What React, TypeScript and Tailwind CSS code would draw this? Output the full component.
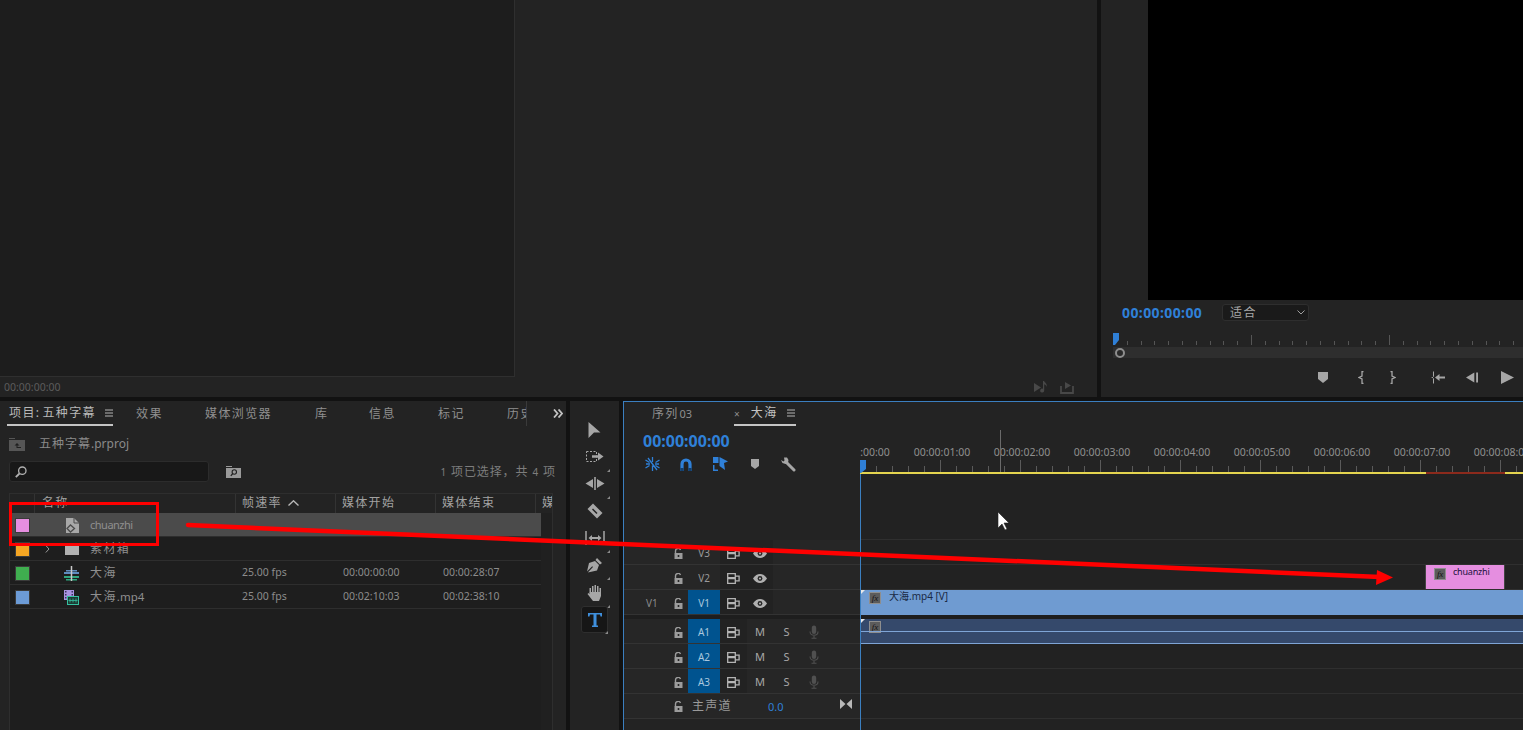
import React from "react";

const cjk = "font-['Noto_Sans','Noto_Sans_CJK_SC',sans-serif]";

const Menu = () => (
  <svg width="8" height="8" viewBox="0 0 8 8" className="shrink-0">
    <path d="M0 1h8M0 4h8M0 7h8" stroke="#b5b5b5" strokeWidth="1" />
  </svg>
);
const Lock = () => (
  <svg width="9" height="11" viewBox="0 0 9 11">
    <path d="M1.5 5V3a2.6 2.6 0 0 1 5-1" fill="none" stroke="#9c9c9c" strokeWidth="1.4" />
    <path d="M0.5 5h8v6h-8z M3.7 7v2h1.6V7z" fill="#9c9c9c" fillRule="evenodd" />
  </svg>
);
const Sync = () => (
  <svg width="13" height="11" viewBox="0 0 13 11" fill="none" stroke="#b4b4b4" strokeWidth="1.3">
    <path d="M0.7 0.7h7.6v4h-7.6zM0.7 5.7h7.6v4.6h-7.6z M8.3 3.2h3.8v4.6h-3.8" />
  </svg>
);
const Eye = () => (
  <svg width="14" height="9" viewBox="0 0 14 9">
    <path d="M0 4.5C2 1.4 4.5 0 7 0s5 1.4 7 4.5C12 7.6 9.5 9 7 9S2 7.6 0 4.5z" fill="#b0b0b0" />
    <circle cx="7" cy="4.5" r="2.4" fill="#262626" />
    <circle cx="7" cy="4.5" r="1.1" fill="#b0b0b0" />
  </svg>
);
const Mic = () => (
  <svg width="10" height="14" viewBox="0 0 10 14" fill="none">
    <rect x="2.8" y="0.5" width="4.4" height="8.5" rx="2.2" fill="#505050" />
    <path d="M1 6.5c0 5 8 5 8 0M5 11v2M2.5 13.3h5" stroke="#505050" strokeWidth="1.1" />
  </svg>
);
const Fx = () => (
  <span className="flex h-[12px] w-[12px] items-center justify-center border border-[#8e8e8e] bg-[#5c5c5c] font-['Liberation_Serif',serif] text-[9px] italic leading-none text-[#111]">
    fx
  </span>
);

const Swatch = ({ c }: { c: string }) => (
  <span className={`block h-[15px] w-[15px] border border-[#3a3a3a] ${c}`} />
);

const rows = [
  { c: "bg-[#e68ee0]", name: "chuanzhi", ext: "", icon: "seq", sel: true, chev: false, fps: "", a: "", b: "" },
  { c: "bg-[#f5a623]", name: "素材箱", ext: "", icon: "bin", sel: false, chev: true, fps: "", a: "", b: "" },
  { c: "bg-[#3fae4f]", name: "大海", ext: "", icon: "wave", sel: false, chev: false, fps: "25.00 fps", a: "00:00:00:00", b: "00:00:28:07" },
  { c: "bg-[#6c9bd6]", name: "大海", ext: ".mp4", icon: "film", sel: false, chev: false, fps: "25.00 fps", a: "00:02:10:03", b: "00:02:38:10" },
];

const ItemIcon = ({ k }: { k: string }) => {
  if (k === "seq")
    return (
      <svg width="13" height="15" viewBox="0 0 13 15">
        <path d="M0 0h8l5 5v10H0z" fill="#a8a8a8" />
        <path d="M8 0v5h5" fill="none" stroke="#4b4b4b" />
        <path d="M1 10.5 4.5 7 8.5 10.5 4.5 14z" fill="none" stroke="#4b4b4b" strokeWidth="1.3" />
      </svg>
    );
  if (k === "bin") return <span className="block h-[11px] w-[14px] bg-[#b0b0b0]" />;
  if (k === "wave")
    return (
      <svg width="15" height="15" viewBox="0 0 15 15">
        <path d="M0 6h15v2H0z" fill="#5f8dbf" />
        <path d="M2 4h11v1.5H2z" fill="#5f8dbf" />
        <path d="M0 10h15v2H0zM2 13h11v1.5H2z" fill="#2fa67f" />
        <path d="M7.5 0v15" stroke="#c9c9c9" strokeWidth="1.5" />
      </svg>
    );
  return (
    <svg width="15" height="15" viewBox="0 0 15 15">
      <path d="M0 0h10v10H0z" fill="#a893e0" />
      <path d="M1 1h1.5v1.5H1zM1 4h1.5v1.5H1zM1 7h1.5v1.5H1zM7.5 1H9v1.5H7.500zM7.5 4H9v1.5H7.500z" fill="#3a3060" />
      <rect x="3.5" y="6.5" width="11" height="8" fill="#1d3a33" stroke="#35c0a0" />
      <path d="M6 8.5v4M9 8.5v4M12 8.5v4M4.5 10.5h9" stroke="#35c0a0" strokeWidth="0.8" />
    </svg>
  );
};

const tabs = [
  { t: "效果", w: "w-[69px]" },
  { t: "媒体浏览器", w: "w-[110px]" },
  { t: "库", w: "w-[54px]" },
  { t: "信息", w: "w-[69px]" },
  { t: "标记", w: "w-[69px]" },
];

function ProjectPanel() {
  return (
    <div className="flex h-full w-[566px] shrink-0 flex-col bg-[#232323]">
      <div className="flex h-[27px] shrink-0 items-start pl-[7px] text-[12px] text-[#8f8f8f]">
        <div className="flex h-[25px] w-[106px] items-center gap-[9px] border-b-2 border-[#c4c4c4] pl-[2px] text-[#b8b8b8] tracking-[1.4px] whitespace-nowrap">
          <span>项目:<span className="ml-[2px]">五种字幕</span></span>
          <Menu />
        </div>
        <div className="w-[23px]" />
        {tabs.map((x) => (
          <div key={x.t} className={`${x.w} flex h-[25px] items-center pt-[1px] tracking-[1.4px] whitespace-nowrap`}>
            {x.t}
          </div>
        ))}
        <div className="flex h-[25px] w-[20px] items-center overflow-hidden border-r border-[#3a3a3a] pt-[1px] tracking-[1.4px] whitespace-nowrap">
          历史记录
        </div>
        <div className="ml-[26px] flex h-[24px] items-center">
          <svg width="10" height="9" viewBox="0 0 10 9" fill="none" stroke="#c4c4c4" strokeWidth="1.8">
            <path d="M1 0.5 4.5 4.5 1 8.5M5.5 0.5 9 4.5 5.5 8.5" />
          </svg>
        </div>
      </div>

      <div className="flex h-[32px] shrink-0 items-center pl-[9px] text-[12px] text-[#8a8a8a]">
        <svg width="16" height="13" viewBox="0 0 16 13">
          <path d="M0 0h6v1H0z M0 2h16v11H0z" fill="#565656" />
          <path d="M8 5 5.5 7.5H7.5V10H12V9H8.5V7.5H10.5z" fill="#1f1f1f" />
        </svg>
        <span className="ml-[14px] tracking-[1px] whitespace-nowrap">五种字幕<span className="tracking-[0px]">.prproj</span></span>
      </div>

      <div className="mt-[1px] flex h-[21px] shrink-0 items-center pl-[9px] pr-[10px]">
        <div className="flex h-[21px] w-[200px] items-center rounded-[3px] border border-[#2c2c2c] bg-[#181818] pl-[5px]">
          <svg width="12" height="12" viewBox="0 0 12 12" fill="none" stroke="#b0b0b0" strokeWidth="1.3">
            <circle cx="7.3" cy="4.7" r="3.7" />
            <path d="M4.5 7.5 0.8 11.2" strokeWidth="1.8" />
          </svg>
        </div>
        <svg className="ml-[17px]" width="15" height="12" viewBox="0 0 15 12">
          <path d="M0 0h6v1H0zM0 2h15v10H0z" fill="#9a9a9a" />
          <circle cx="8.3" cy="6" r="2.2" fill="none" stroke="#222" strokeWidth="1.1" />
          <path d="M6.7 7.6 4.8 9.8" stroke="#222" strokeWidth="1.3" />
        </svg>
        <span className="ml-auto text-[12px] tracking-[0.9px] text-[#7d7d7d] whitespace-nowrap">
          <span className="text-[10px]">1</span> 项已选择，共 <span className="text-[10px]">4</span> 项
        </span>
      </div>

      <div className="mt-[11px] ml-[9px] flex w-[544px] flex-1 flex-col border-l border-r border-t border-[#2e2e2e] bg-[#1e1e1e]">
        <div className="flex h-[19px] shrink-0 items-center bg-[#232323] text-[12px] tracking-[1.3px] text-[#a2a2a2]">
          <div className="h-full w-[25px] border-r border-[#333]" />
          <div className="flex h-full w-[201px] items-center border-r border-[#333] pb-[1px] pl-[7px]">名称</div>
          <div className="flex h-full w-[100px] items-center justify-between border-r border-[#333] pb-[1px] pl-[6px] pr-[36px]">
            <span>帧速率</span>
            <svg width="11" height="6" viewBox="0 0 11 6" fill="none" stroke="#b8b8b8" strokeWidth="1.4">
              <path d="M0.5 5.5 5.5 0.8 10.5 5.5" />
            </svg>
          </div>
          <div className="flex h-full w-[100px] items-center border-r border-[#333] pb-[1px] pl-[6px]">媒体开始</div>
          <div className="flex h-full w-[100px] items-center border-r border-[#333] pb-[1px] pl-[6px]">媒体结束</div>
          <div className="flex h-full flex-1 items-center overflow-hidden pb-[1px] pl-[6px]">媒</div>
        </div>
        <div className="flex flex-1">
          <div className="w-[531px]">
            {rows.map((r) => (
              <div
                key={r.icon}
                className={`flex h-[24px] items-center border-b border-[#2e2e2e] pt-[1px] text-[10.5px] text-[#8f8f8f] ${r.sel ? "bg-[#4b4b4b]" : ""}`}
              >
                <div className="flex w-[25px] justify-start pl-[5px]"><Swatch c={r.c} /></div>
                <div className="flex w-[22px] justify-start pl-[10px]">
                  {r.chev && (
                    <svg width="5" height="8" viewBox="0 0 5 8" fill="none" stroke="#9a9a9a">
                      <path d="M0.8 0.5 4 4 0.8 7.5" />
                    </svg>
                  )}
                </div>
                <div className="flex w-[22px] items-center justify-end"><ItemIcon k={r.icon} /></div>
                <div className="ml-[11px] w-[151px] whitespace-nowrap">
                  {r.sel ? (
                    <span className="text-[11px] tracking-[-0.5px]">{r.name}</span>
                  ) : (
                    <span className="text-[12px] tracking-[1.4px]">{r.name}</span>
                  )}
                  {r.ext && <span className="text-[11.5px]">{r.ext}</span>}
                </div>
                <div className="w-[100px] pl-[1px] text-[#8c8c8c]">{r.fps}</div>
                <div className="w-[100px] pl-[2px] text-[#8c8c8c]">{r.a}</div>
                <div className="w-[100px] pl-[2px] text-[#8c8c8c]">{r.b}</div>
              </div>
            ))}
          </div>
          <div className="flex-1 bg-[#202020]" />
        </div>
      </div>
    </div>
  );
}

const Corner = () => <span className="absolute -bottom-[2px] -right-[1px] h-0 w-0 border-b-[3px] border-l-[3px] border-b-[#8a8a8a] border-l-transparent" />;

function Tools() {
  const c = "#a6a6a6";
  const cell = "relative flex h-[27px] w-[28px] items-center justify-center";
  return (
    <div className="ml-[4px] flex h-full w-[49px] shrink-0 flex-col items-center bg-[#232323] pt-[15px]">
      <div className={cell}>
        <svg width="13" height="16" viewBox="0 0 13 16"><path d="M0.5 0 12.5 10.5 6 10.5 0.5 16z" fill={c} /></svg>
      </div>
      <div className={cell}>
        <svg width="18" height="11" viewBox="0 0 18 11">
          <rect x="0.5" y="0.5" width="10" height="10" fill="none" stroke={c} strokeDasharray="2 1.5" />
          <path d="M6 4.2h6V1.5l5.5 4-5.5 4V6.8H6z" fill={c} />
        </svg>
        <Corner />
      </div>
      <div className={cell}>
        <svg width="20" height="13" viewBox="0 0 20 13">
          <path d="M9.2 0h1.600v13H9.200z M0.500 6.500 8 2v9zM19.500 6.500 12 2v9z" fill={c} />
        </svg>
        <Corner />
      </div>
      <div className={cell}>
        <svg width="16" height="16" viewBox="0 0 16 16">
          <path d="M6 0.5 15.5 10 10 15.5 0.5 6z" fill={c} />
          <path d="M5.5 6 10 10.5" stroke="#232323" strokeWidth="1.5" />
        </svg>
      </div>
      <div className={cell}>
        <svg width="20" height="14" viewBox="0 0 20 14">
          <path d="M1 0v14M19 0v14" stroke={c} strokeWidth="1.5" />
          <path d="M3.5 7 7 4v2h6V4l3.5 3L13 10V8H7v2z" fill={c} />
        </svg>
        <Corner />
      </div>
      <div className={`${cell} h-[26px]`}>
        <svg width="16" height="16" viewBox="0 0 16 16">
          <path d="M10 1l5 5-2 1.5L8.5 3z M8 4l4 4-2 5.5L0.800 15.500 6 10l-0.800-0.800L0 14.500 2 6z" fill={c} />
        </svg>
        <Corner />
      </div>
      <div className={`${cell} h-[28px]`}>
        <svg width="16" height="17" viewBox="0 0 16 17" fill={c}>
          <path d="M5 2h1.5v7H5zM7.5 1H9v8H7.5zM10 2h1.5v7H10zM12.500 4H14v7h-1.500zM2.500 4H4v7H2.500z" />
          <path d="M2.500 8H14v4l-2 5H6L0.500 10l1-1 2 1.500z" />
        </svg>
        <Corner />
      </div>
      <div className="relative flex h-[27px] w-[27px] items-center justify-center rounded-[3px] border border-[#2e2e2e] bg-[#161616]">
        <svg width="14" height="14" viewBox="0 0 14 14" fill="#3f8fdc">
          <path d="M0 0h14v3.500h-1.500l-0.500-2H8.500v11H10V14H4v-1.500h1.500v-11H2l-0.500 2H0z" />
        </svg>
        <Corner />
      </div>
    </div>
  );
}

type T = { id: string; src?: string; on?: boolean; audio?: boolean };
const video: T[] = [{ id: "V3" }, { id: "V2" }, { id: "V1", src: "V1", on: true }];
const audio: T[] = [
  { id: "A1", on: true, audio: true },
  { id: "A2", on: true, audio: true },
  { id: "A3", on: true, audio: true },
];

function TrackHead({ t }: { t: T }) {
  return (
    <div className="flex h-[25px] items-stretch border-b border-[#333] bg-[#262626] text-[10px] text-[#9a9a9a]">
      <div className="flex w-[46px] items-center justify-start pl-[22px] pt-[2px] text-[#8a8a8a]">
        {t.src && <span>{t.src}</span>}
      </div>
      <div className="flex w-[16px] items-center justify-center pt-[2px]"><Lock /></div>
      <div className="w-[2px]" />
      <div className={`flex w-[32px] items-center justify-center pt-[2px] ${t.on ? "bg-[#00538f] text-[#a9c7de]" : ""}`}>
        {t.id}
      </div>
      <div className="flex w-[27px] items-center justify-center bg-[#222] pt-[2px]"><Sync /></div>
      {t.audio ? (
        <>
          <div className="flex w-[26px] items-center justify-center pt-[2px] text-[11px] text-[#a8a8a8]">M</div>
          <div className="flex w-[27px] items-center justify-center pt-[2px] text-[11px] text-[#a8a8a8]">S</div>
          <div className="flex w-[27px] items-center justify-center pt-[2px]"><Mic /></div>
        </>
      ) : (
        <div className="flex w-[26px] items-center justify-center bg-[#222] pt-[2px]"><Eye /></div>
      )}
    </div>
  );
}

function Ruler() {
  const labels = [":00:00", "00:00:01:00", "00:00:02:00", "00:00:03:00", "00:00:04:00", "00:00:05:00", "00:00:06:00", "00:00:07:00", "00:00:08:00"];
  const ticks = Array.from({ length: 42 }, (_, i) => i * 16);
  return (
    <div className="relative h-[46px] shrink-0 overflow-hidden">
      <div className="-mb-[1px] -ml-[38px] flex h-[33px] items-end text-[10.5px] text-[#8f8f8f]">
        {labels.map((l, i) => (
          <div key={l} className={`w-[80px] shrink-0 text-center whitespace-nowrap ${i === 0 ? "pl-[26px]" : ""}`}>{l}</div>
        ))}
      </div>
      <svg width="663" height="12" viewBox="0 0 663 12" className="block">
        {ticks.map((x) => (
          <path key={x} d={`M${x + 0.5} ${x % 80 === 0 ? 0 : 6}V12`} stroke="#5a5a5a" />
        ))}
      </svg>
      <div className="flex h-[2px]">
        <div className="w-[566px] bg-[#e4d44f]" />
        <div className="w-[79px] bg-[#8c2a1c]" />
        <div className="flex-1 bg-[#e4d44f]" />
      </div>
      <svg width="7" height="13" viewBox="0 0 7 13" className="absolute left-0 top-[32px]">
        <path d="M0 0h6v9L1 13H0z" fill="#2f7fd6" />
      </svg>
    </div>
  );
}

const ClipCorner = () => (
  <span className="absolute left-0 top-0 h-0 w-0 border-r-[4px] border-t-[4px] border-r-transparent border-t-[#e8e8e8]" />
);

function Timeline() {
  return (
    <div className="ml-[4px] flex h-full flex-1 flex-col overflow-hidden border-l border-t border-[#3b7fc0] bg-[#232323]">
      <div className="flex h-[26px] shrink-0 items-start pl-[28px] text-[12px] text-[#8f8f8f]">
        <div className="flex h-[24px] w-[79px] items-center tracking-[1.2px] whitespace-nowrap">序列<span className="ml-[1px] text-[11px] tracking-[0px]">03</span></div>
        <div className="flex h-[24px] w-[3px] items-center" />
        <div className="flex h-[24px] items-center text-[10px]">×</div>
        <div className="ml-[-6px] flex h-[24px] w-[62px] items-center gap-[9px] border-b-2 border-[#c4c4c4] pl-[17px] text-[#c4c4c4] tracking-[1.4px] whitespace-nowrap">
          <span>大海</span>
          <Menu />
        </div>
      </div>
      <div className="flex flex-1 flex-col">
        <div className="flex flex-1">
          <div className="flex w-[236px] shrink-0 flex-col">
            <div className="flex h-[112px] flex-col pl-[19px] pt-[1px]">
              <div className="h-[24px] text-[16px] font-bold leading-[24px] text-[#2f80d8] whitespace-nowrap">00:00:00:00</div>
              <div className="mt-[3px] flex h-[16px] items-center pl-[2px]">
                <svg width="15" height="14" viewBox="0 0 15 14" fill="none" stroke="#2f80d8" strokeWidth="1.3">
                  <path d="M7.5 0v5M7.5 8.5v5.500M0.500 3l4 2.500M10.500 8.500l4 2.500M0.500 11l4-2.500M10.500 5.500l4-2.500M1 7h4M10 7h4M3 1l9 12" />
                </svg>
                <svg className="ml-[20px]" width="12" height="13" viewBox="0 0 12 13" fill="none">
                  <path d="M2 13V6a4 4 0 0 1 8 0v7" stroke="#2f80d8" strokeWidth="3.2" />
                  <path d="M0.4 11.500h3.200M8.400 11.500h3.200" stroke="#123f6e" strokeWidth="3" />
                </svg>
                <svg className="ml-[21px]" width="15" height="14" viewBox="0 0 15 14">
                  <path d="M0 0h5.500v6H0zM0 8h1.500v4.500H5V14H0z" fill="#2f80d8" />
                  <path d="M6.500 0 15 4.500l-4 1.500 1 7-5.500-4z" fill="#2f80d8" />
                </svg>
                <svg className="ml-[23px]" width="8" height="10" viewBox="0 0 8 10"><path d="M0 0h8v7L4 10 0 7z" fill="#a6a6a6" /></svg>
                <svg className="ml-[22px]" width="15" height="15" viewBox="0 0 15 15" fill="none">
                  <path d="M5.500 5.500 13 13" stroke="#a6a6a6" strokeWidth="3" strokeLinecap="round" />
                  <path d="M3 0.500l3 0 1.500 2.500-0.500 3-2.500 1L1.500 6 0 3l2.500 1.500L3.500 3.500z" fill="#a6a6a6" />
                </svg>
              </div>
            </div>
            {video.map((t) => <TrackHead key={t.id} t={t} />)}
            <div className="h-[4px] shrink-0 bg-[#1e1e1e]" />
            {audio.map((t) => <TrackHead key={t.id} t={t} />)}
            <div className="flex h-[25px] items-center border-b border-[#333] bg-[#262626] text-[12px] text-[#9a9a9a]">
              <div className="w-[46px]" />
              <div className="flex w-[16px] justify-center"><Lock /></div>
              <div className="ml-[6px] w-[76px] tracking-[1.3px] whitespace-nowrap">主声道</div>
              <div className="w-[28px] pt-[2px] text-[11px] text-[#2f80d8]">0.0</div>
              <div className="ml-[44px] -mt-[5px]">
                <svg width="12" height="10" viewBox="0 0 12 10"><path d="M0 0l5.500 5L0 10zM12 0 6.500 5l5.500 5z" fill="#b8b8b8" /></svg>
              </div>
            </div>
          </div>
          <div className="flex flex-1 flex-col">
            <Ruler />
            <div className="flex flex-1 flex-col border-l border-[#3b7fc0] bg-[#222]">
              <div className="h-[66px] shrink-0 border-b border-[#2f2f2f]" />
              <div className="h-[25px] shrink-0 border-b border-[#2f2f2f]" />
              <div className="h-[25px] shrink-0 border-b border-[#2f2f2f] pl-[564px]">
                <div className="flex h-full w-[80px] items-start gap-[7px] border-x border-[#444] bg-[#e58ee0] pl-[8px] pt-[1px] text-[9px] leading-[11px] tracking-[-0.2px] text-[#1a1140]">
                  <span className="mt-[2px]"><Fx /></span>
                  <span>chuanzhi</span>
                </div>
              </div>
              <div className="relative flex h-[25px] shrink-0 items-start gap-[8px] bg-[#6f9bd1] pl-[8px] pt-[1px] text-[10px] leading-[11px] text-[#1a2a44]">
                <ClipCorner />
                <span className="mt-[1px]"><Fx /></span>
                <span className="whitespace-nowrap">大海.mp4 [V]</span>
              </div>
              <div className="h-[4px] shrink-0 bg-[#1e1e1e]" />
              <div className="relative flex h-[25px] shrink-0 flex-col border-b border-[#7fa5d6] bg-[#35496b] pl-[8px]">
                <ClipCorner />
                <div className="h-[11px] pt-[2px]"><Fx /></div>
                <div className="-ml-[8px] mt-[1px] h-[1px] bg-[#7fa5d6]" />
              </div>
              <div className="h-[25px] shrink-0 border-b border-[#2f2f2f]" />
              <div className="h-[25px] shrink-0 border-b border-[#2f2f2f]" />
              <div className="h-[25px] shrink-0 border-b border-[#2f2f2f]" />
            </div>
          </div>
        </div>
      </div>
    </div>
  );
}

function Program() {
  const ticks = Array.from({ length: 30 }, (_, i) => i);
  return (
    <div className="ml-[4px] flex h-full flex-1 flex-col bg-[#232323]">
      <div className="flex h-[300px] shrink-0">
        <div className="w-[47px]" />
        <div className="flex-1 bg-black" />
      </div>
      <div className="flex h-[33px] shrink-0 items-start pl-[21px] pt-[4px]">
        <span className="w-[100px] text-[14px] font-bold leading-[17px] tracking-[0.4px] text-[#2f80d8] whitespace-nowrap">00:00:00:00</span>
        <div className="flex h-[17px] w-[87px] items-center justify-between rounded-[3px] border border-[#2e2e2e] bg-[#1a1a1a] pl-[7px] pr-[3px] text-[12px] tracking-[1.5px] text-[#a8a8a8]">
          <span>适合</span>
          <svg width="8" height="5" viewBox="0 0 8 5" fill="none" stroke="#a0a0a0"><path d="M0.5 0.5 4 4l3.5-3.5" /></svg>
        </div>
      </div>
      <div className="relative ml-[12px] h-[12px] shrink-0">
        <svg width="410" height="12" viewBox="0 0 410 12" className="block">
          {ticks.map((i) => (
            <path key={i} d={`M${Math.round(i * 13.8) + 0.5} ${i % 10 === 0 && i > 0 ? 2 : 8}V12`} stroke="#555" />
          ))}
          <path d="M0 0h6v7l-4 5H0z" fill="#2f7fd6" />
        </svg>
      </div>
      <div className="relative ml-[12px] mt-[2px] flex h-[11px] shrink-0 items-center bg-[#2e2e2e]">
        <span className="absolute left-[2px] block h-[10px] w-[10px] rounded-full border-2 border-[#8e8e8e] bg-[#2a2a2a]" />
      </div>
      <div className="flex h-[39px] shrink-0 items-center pl-[217px]">
        <svg width="10" height="11" viewBox="0 0 10 11"><path d="M0 0h10v7l-5 4L0 7z" fill="#a6a6a6" /></svg>
        <svg className="ml-[30px]" width="6" height="13" viewBox="0 0 6 13" fill="none" stroke="#a6a6a6" strokeWidth="1.3"><path d="M5.5 0.5h-1.5v4.5L1 6.5l3 1.5v4.5h1.5" /></svg>
        <svg className="ml-[26px]" width="6" height="13" viewBox="0 0 6 13" fill="none" stroke="#a6a6a6" strokeWidth="1.3"><path d="M0.5 0.5h1.5v4.5l3 1.5-3 1.5v4.5H0.5" /></svg>
        <svg className="ml-[34px]" width="15" height="13" viewBox="0 0 15 13">
          <path d="M3 0.5h1v5L1 6.5l3 1v5H3z" fill="#a6a6a6" />
          <path d="M5 6.5 9.5 3v2.5H15v2H9.5V10z" fill="#a6a6a6" />
        </svg>
        <svg className="ml-[21px]" width="12" height="11" viewBox="0 0 13 11"><path d="M9 0v11L0 5.5zM11 0h2v11h-2z" fill="#a6a6a6" /></svg>
        <svg className="ml-[23px]" width="13" height="13" viewBox="0 0 13 13"><path d="M0 0l13 6.5L0 13z" fill="#a6a6a6" /></svg>
      </div>
    </div>
  );
}

function Source() {
  return (
    <div className="flex h-full w-[1097px] shrink-0 flex-col bg-[#232323]">
      <div className="h-[377px] w-[515px] shrink-0 border-b border-r border-[#2f2f2f] bg-[#1d1d1d]" />
      <div className="flex h-[20px] items-center justify-between pl-[4px] pr-[23px] pt-[1px]">
        <span className="text-[10.5px] text-[#5c5c5c]">00:00:00:00</span>
        <div className="flex items-center gap-[12px]">
          <svg width="14" height="13" viewBox="0 0 14 13" fill="#484848">
            <path d="M0 2v9l7-4.500z" />
            <path d="M9 0h1.200v9.500a2 2 0 1 1-1.200-1.800zM10 0c1 2 3.500 2.500 2.500 6-0.300-2-1.500-2.500-2.500-3z" />
          </svg>
          <svg width="14" height="13" viewBox="0 0 14 13" fill="none" stroke="#484848" strokeWidth="1.8">
            <path d="M1 5v7h12V5" />
            <path d="M5 1l6 3.500L5 8z" fill="#484848" stroke="none" />
          </svg>
        </div>
      </div>
    </div>
  );
}

export default function App() {
  return (
    <div className={`relative h-[730px] w-[1523px] overflow-hidden bg-[#121212] ${cjk}`}>
      <div className="flex h-[397px]">
        <Source />
        <Program />
      </div>
      <div className="mt-[4px] flex h-[329px]">
        <ProjectPanel />
        <Tools />
        <Timeline />
      </div>

      {/* annotations lying over the interface */}
      <div className="absolute left-[9px] top-[502px] h-[44px] w-[150px] border-[3px] border-[#ff0000]" />
      <svg className="absolute left-0 top-0" width="1523" height="730" viewBox="0 0 1523 730">
        <path d="M188 525 1380 577" stroke="#ff0000" strokeWidth="4.5" strokeLinecap="round" />
        <path d="M1377 570 1393 577.5 1376 585z" fill="#ff0000" />
        <path d="M998 512v16l4-4 3 6 2-1-3-6h5z" fill="#fff" stroke="#222" strokeWidth="0.6" />
        <path d="M1000.5 430v42" stroke="#6a6a6a" />
      </svg>
    </div>
  );
}
